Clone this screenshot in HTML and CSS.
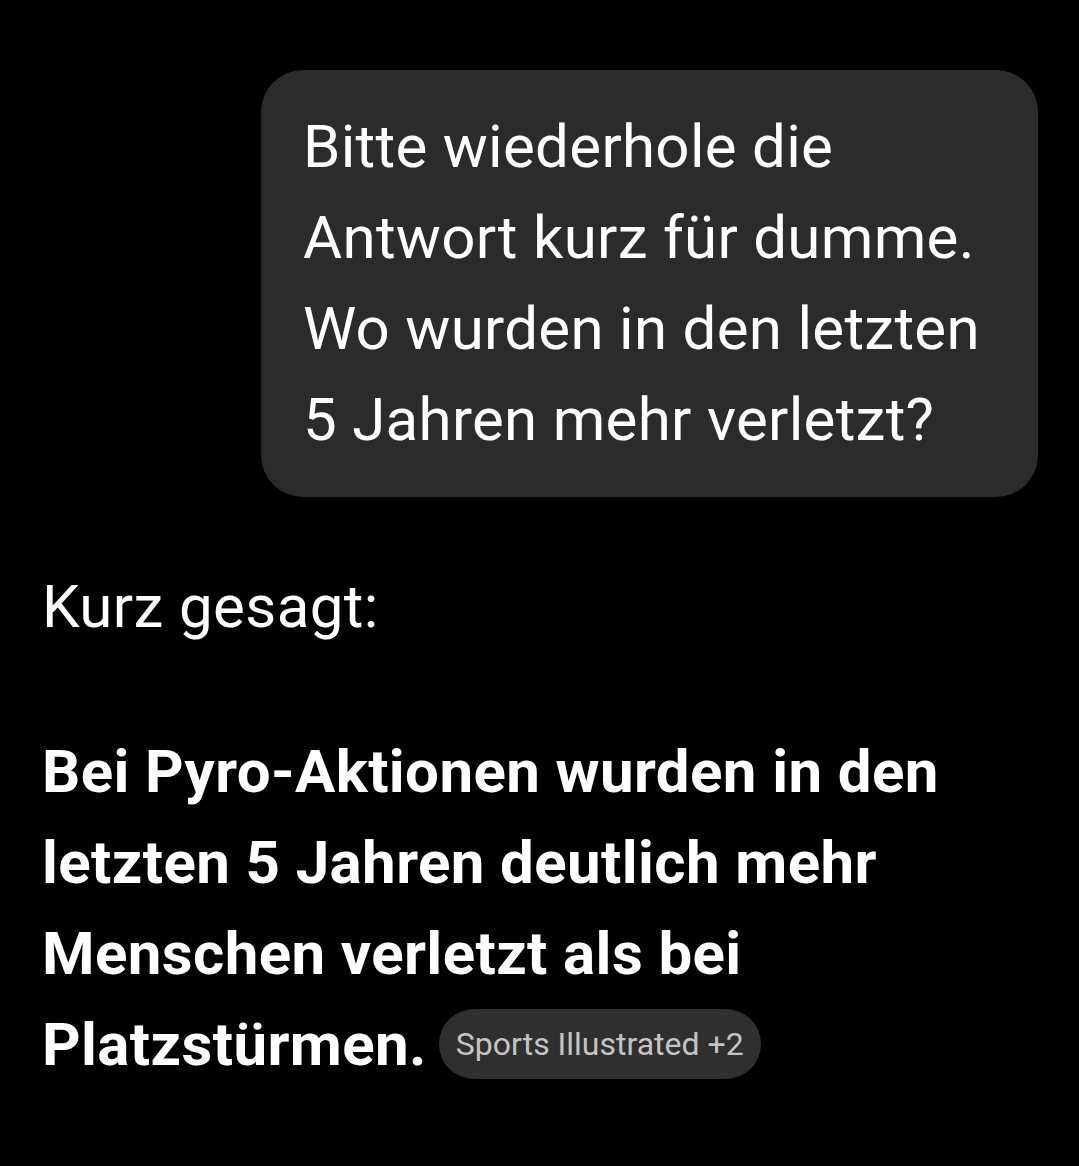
FILE: index.html
```html
<!DOCTYPE html>
<html lang="de">
<head>
    <meta charset="UTF-8">
    <meta name="viewport" content="width=device-width, initial-scale=1.0">
    <title>Chat</title>
    <link rel="stylesheet" href="styles.css">
</head>

<body>
    <section class="chat">
        <div class="row-user">
            <div class="bubble">
                Bitte wiederhole die Antwort kurz für dumme. Wo wurden in den letzten 5 Jahren mehr verletzt?
            </div>
        </div>

        <article class="answer">
            <p class="plain">Kurz gesagt:</p>
            <p class="strong"><b>Bei Pyro-Aktionen wurden in den letzten 5 Jahren deutlich mehr Menschen verletzt als bei Platzstürmen.</b><span class="chip">Sports Illustrated +2</span></p>
        </article>
    </section>
</body>
</html>
```

FILE: styles.css
```css
* {
  box-sizing: border-box;
}

body {
  margin: 0;
  background-color: #000;
  color: #fff;
  font-family: Roboto, "Noto Sans", sans-serif;
}

.chat {
  padding: 70px 42px 0 42px;
}

/* user message on the right */
.row-user {
  display: flex;
  justify-content: flex-end;
}

.bubble {
  width: 777px;
  margin-right: -1px;
  background-color: #2b2b2b;
  border-radius: 42px;
  padding: 31px 40px 32px 42px;
  font-size: 60px;
  line-height: 91px;
  letter-spacing: 0.3px;
}

.answer {
  padding-top: 64px;
}

.answer p {
  margin: 0;
  font-size: 60px;
  line-height: 91px;
}

.plain {
  letter-spacing: 0.4px;
  margin-bottom: 74px !important;
}

.strong b {
  font-weight: bold;
  letter-spacing: 0.4px;
}

.chip {
  display: inline-block;
  vertical-align: 10px;
  margin-left: 12px;
  padding: 0 17px;
  height: 70px;
  line-height: 70px;
  border-radius: 35px;
  background-color: #2f2f2f;
  color: #c4c4c4;
  font-size: 32px;
  font-weight: normal;
  letter-spacing: 0;
}
```
